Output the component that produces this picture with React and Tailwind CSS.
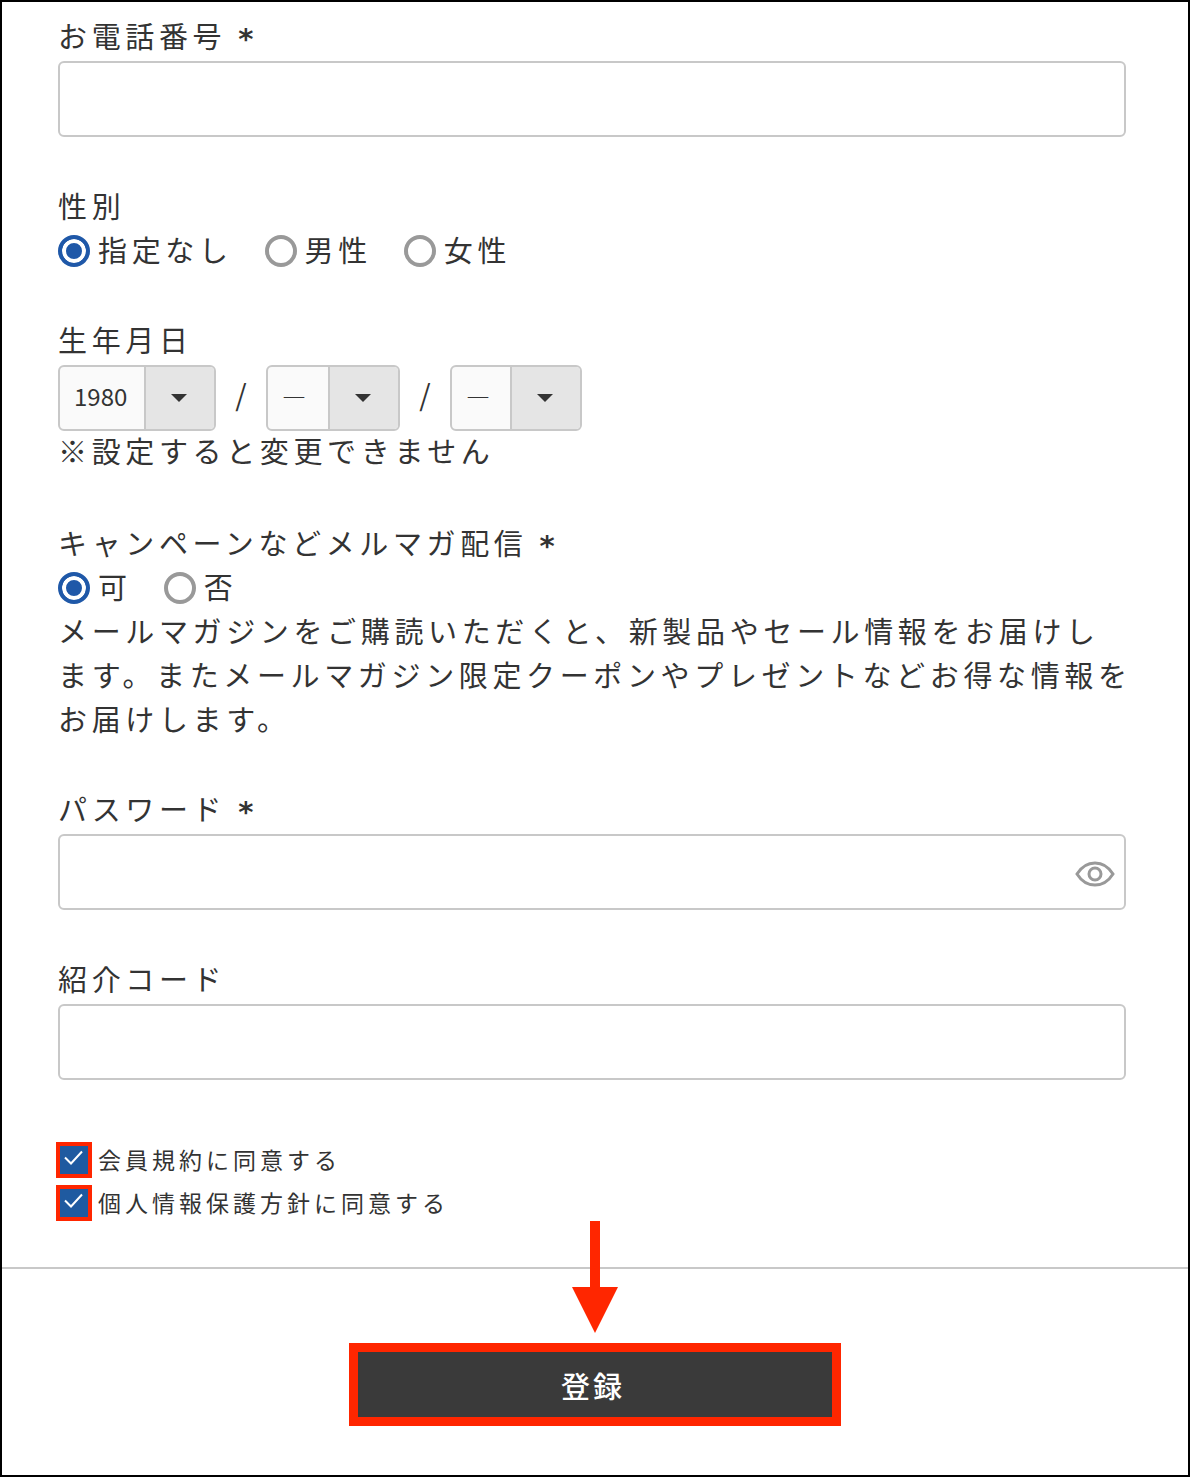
import { useState } from 'react'
import clsx from 'clsx'

const GENDERS = ['指定なし', '男性', '女性']
const MAIL_OPTIONS = ['可', '否']
const YEARS = Array.from({ length: 100 }, (_, i) => String(1925 + i))
const MONTHS = Array.from({ length: 12 }, (_, i) => String(i + 1))
const DAYS = Array.from({ length: 31 }, (_, i) => String(i + 1))

const INPUT_CLASS = 'block w-full h-19 px-4 bg-white border-2 border-[#c8c8c8] rounded-md'

function Required() {
  return <span className="inline-block h-8 align-top pt-1 ml-3 font-bold font-['DejaVu_Sans',sans-serif]">*</span>
}

function TextField({ id, label, type = 'text', required, children }) {
  return (
    <div>
      <label htmlFor={id} className="block mb-1">
        {label}
        {required && <Required />}
      </label>
      <div className="relative">
        <input id={id} name={id} type={type} className={INPUT_CLASS} />
        {children}
      </div>
    </div>
  )
}

function RadioGroup({ name, legend, options, required, children }) {
  const [value, setValue] = useState(options[0])

  return (
    <fieldset>
      <legend>
        {legend}
        {required && <Required />}
      </legend>
      <div className="flex gap-8">
        {options.map(option => (
          <label key={option} className="flex items-center gap-2">
            <input
              type="radio"
              name={name}
              checked={value === option}
              onChange={() => setValue(option)}
              className="appearance-none size-8 mt-1 rounded-full border-4 border-[#999999] bg-white checked:border-[#1f58a8] checked:bg-[#1f58a8] checked:shadow-[inset_0_0_0_4px_#ffffff]"
            />
            {option}
          </label>
        ))}
      </div>
      {children}
    </fieldset>
  )
}

function DateSelect({ label, options, placeholder, defaultValue, className }) {
  return (
    <div className={clsx('grid grid-cols-[1fr_70px] h-[66px] border-2 border-[#c8c8c8] rounded-md overflow-hidden bg-[#fafafa]', className)}>
      <select
        aria-label={label}
        defaultValue={defaultValue}
        className="col-span-2 col-start-1 row-start-1 appearance-none w-full h-full pl-3.5 pb-1 text-2xl tracking-normal">
        {placeholder && <option value="">{placeholder}</option>}
        {options.map(o => <option key={o} value={o}>{o}</option>)}
      </select>
      <span className="col-start-2 row-start-1 flex items-center justify-center pr-0.5 pointer-events-none border-l-2 border-[#c8c8c8] bg-[#e5e5e5]">
        <svg width="16" height="8" viewBox="0 0 16 8" fill="#333333">
          <path d="M0 0h16L8 8z" />
        </svg>
      </span>
    </div>
  )
}

function Agreement({ id, label }) {
  return (
    <div className="flex items-center h-[43px] -ml-0.5">
      <span className="grid">
        <input
          id={id}
          type="checkbox"
          defaultChecked
          className="peer col-start-1 row-start-1 appearance-none size-9 border-4 border-[#ff2600] bg-white checked:bg-[#1f5aa0]"
        />
        <svg
          className="col-start-1 row-start-1 size-9 pointer-events-none hidden peer-checked:block"
          viewBox="0 0 36 36" fill="none" stroke="#ffffff" strokeWidth="2">
          <path d="M9 15.5l6 6L26 9.5" />
        </svg>
      </span>
      <label htmlFor={id} className="pl-1.5 pb-0.5 text-[23px] tracking-[4px]">{label}</label>
    </div>
  )
}

export default function App() {
  const [showPassword, setShowPassword] = useState(false)

  return (
    <form
      onSubmit={e => e.preventDefault()}
      className="border-2 border-black bg-white text-[#333333] font-['Noto_Sans_CJK_JP',sans-serif] text-[29px] leading-[44px] tracking-[0.16em]">
      <div className="flex flex-col gap-[46px] pt-[11px] pl-14 pr-[62px]">
        <TextField id="tel" type="tel" label="お電話番号" required />

        <RadioGroup name="gender" legend="性別" options={GENDERS} />

        <fieldset>
          <legend className="mb-1">生年月日</legend>
          <div className="flex items-center">
            <DateSelect label="年" options={YEARS} defaultValue="1980" className="w-[158px]" />
            <span className="w-[50px] pb-2.5 text-center tracking-normal">/</span>
            <DateSelect label="月" options={MONTHS} placeholder="―" defaultValue="" className="w-[134px]" />
            <span className="w-[50px] pb-2.5 text-center tracking-normal">/</span>
            <DateSelect label="日" options={DAYS} placeholder="―" defaultValue="" className="w-[132px]" />
          </div>
          <p className="-mt-[3px] pb-0.5">※設定すると変更できません</p>
        </fieldset>

        <RadioGroup name="mailmag" legend="キャンペーンなどメルマガ配信" options={MAIL_OPTIONS} required>
          <p className="-mr-3">
            メールマガジンをご購読いただくと、新製品やセール情報をお届けし<br />
            ます。またメールマガジン限定クーポンやプレゼントなどお得な情報を<br />
            お届けします。
          </p>
        </RadioGroup>

        <TextField id="password" type={showPassword ? 'text' : 'password'} label="パスワード" required>
          <button
            type="button"
            aria-label="パスワードを表示"
            onClick={() => setShowPassword(!showPassword)}
            className="absolute inset-y-0 right-2.5 flex items-center">
            <svg width="42" height="30" viewBox="0 0 42 30" fill="none" stroke="#999999" strokeWidth="3">
              <path d="M3 17C8 9 14 6 21 6s13 3 18 11c-5 8-11 11-18 11S8 25 3 17z" />
              <circle cx="21" cy="17" r="6" />
            </svg>
          </button>
        </TextField>

        <TextField id="code" label="紹介コード" />
      </div>

      <div className="pt-[58px] pb-[43px] pl-14">
        <Agreement id="terms" label="会員規約に同意する" />
        <Agreement id="privacy" label="個人情報保護方針に同意する" />
      </div>

      <div className="relative flex justify-center pt-[74px] pb-[49px] border-t-2 border-[#c8c8c8]">
        <svg
          className="absolute -top-12 left-1/2 -translate-x-1/2"
          width="46" height="112" viewBox="0 0 46 112" fill="#ff2600">
          <path d="M18 0h10v66h18L23 112 0 66h18z" />
        </svg>
        <button
          type="submit"
          className="w-[492px] h-[83px] pr-1 border-9 border-[#ff2600] bg-[#3a3a3a] text-white font-medium tracking-[3px]">
          登録
        </button>
      </div>
    </form>
  )
}
